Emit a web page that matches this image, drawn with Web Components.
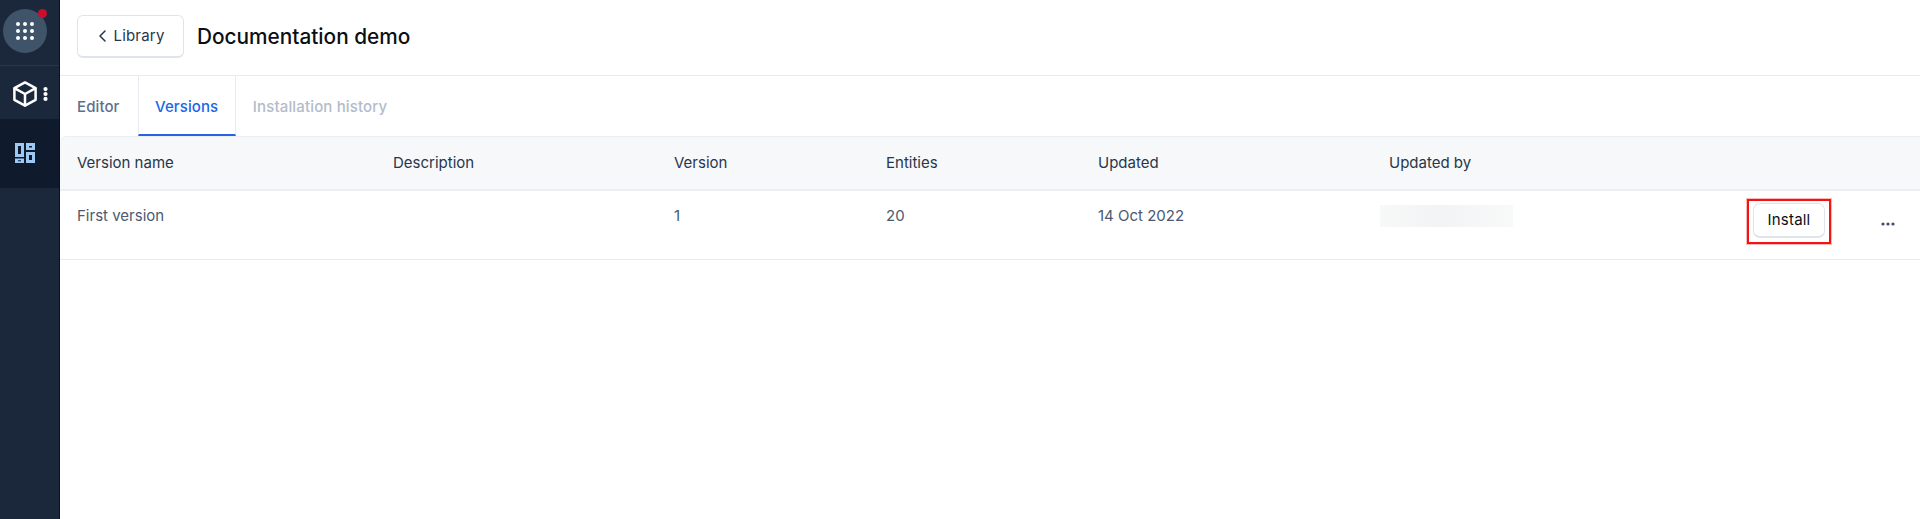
<!DOCTYPE html>
<html lang="en">
<head>
<meta charset="utf-8">
<title>Documentation demo</title>
<style>
    html, body { margin: 0; height: 100%; background: #fff; overflow: hidden; }
    body { font-family: Inter, "Liberation Sans", sans-serif; color: #27364b; }
</style>
</head>
<body>

<app-shell>
    <side-rail slot="rail"></side-rail>
    <page-header title="Documentation demo" back="Library"></page-header>
    <tab-bar>
        <tab-item>Editor</tab-item>
        <tab-item active>Versions</tab-item>
        <tab-item disabled>Installation history</tab-item>
    </tab-bar>
    <versions-table>
        <table-row head>
            <span>Version name</span><span>Description</span><span>Version</span>
            <span>Entities</span><span>Updated</span><span>Updated by</span>
        </table-row>
        <table-row>
            <span>First version</span><span></span><span>1</span>
            <span>20</span><span>14 Oct 2022</span><blur-name></blur-name>
            <install-button slot="action">Install</install-button>
            <more-dots slot="more"></more-dots>
        </table-row>
    </versions-table>
</app-shell>

<script>
class AppShell extends HTMLElement {
    constructor() {
        super();
        this.attachShadow({ mode: 'open' });
    }

    connectedCallback() {
        this.shadowRoot.innerHTML = `
            <style>
                :host { display: flex; height: 519px; width: 100%; }
                main { flex: 1; min-width: 0; display: flex; flex-direction: column; }
            </style>
            <slot name="rail"></slot>
            <main><slot></slot></main>
        `;
    }
}

class SideRail extends HTMLElement {
    constructor() {
        super();
        this.attachShadow({ mode: 'open' });
    }

    connectedCallback() {
        this.shadowRoot.innerHTML = `
            <style>
                :host {
                    display: flex;
                    flex-direction: column;
                    flex: none;
                    width: 60px;
                    box-sizing: border-box;
                    height: 100%;
                    background: #1b283b;
                    border-right: 1px solid #0b1118;
                }
                .apps {
                    height: 66px;
                    padding: 9px 0 0 3px;
                    border-bottom: 1px solid #2a3749;
                    box-sizing: border-box;
                }
                .circle {
                    position: relative;
                    width: 44px;
                    height: 44px;
                    border-radius: 50%;
                    background: #3f5369;
                    display: flex;
                    justify-content: center;
                    align-items: center;
                }
                .badge {
                    position: absolute;
                    top: 0;
                    right: 0;
                    width: 9px;
                    height: 9px;
                    border-radius: 50%;
                    background: #c8102e;
                }
                .cube {
                    height: 53px;
                    display: flex;
                    align-items: center;
                    padding: 3px 0 0 13px;
                    gap: 6px;
                    box-sizing: border-box;
                }
                .active {
                    height: 69px;
                    background: #0f1b2c;
                    padding: 24px 0 0 15px;
                    box-sizing: border-box;
                }
                svg { display: block; }
            </style>
            <div class="apps">
                <div class="circle">
                    <span class="badge"></span>
                    <svg width="18" height="18" viewBox="0 0 18 18" fill="#fff">
                        <circle cx="2" cy="2" r="2"/><circle cx="9" cy="2" r="2"/><circle cx="16" cy="2" r="2"/>
                        <circle cx="2" cy="9" r="2"/><circle cx="9" cy="9" r="2"/><circle cx="16" cy="9" r="2"/>
                        <circle cx="2" cy="16" r="2"/><circle cx="9" cy="16" r="2"/><circle cx="16" cy="16" r="2"/>
                    </svg>
                </div>
            </div>
            <div class="cube">
                <svg width="24" height="26" viewBox="0 0 24 26" fill="none" stroke="#fff" stroke-width="2.5" stroke-linejoin="round" stroke-linecap="round">
                    <path d="M12 1.400 22.600 7.200V18.800L12 24.600 1.400 18.800V7.200Z"/>
                    <path d="M1.800 7.400 12 13 22.200 7.400M12 13V24.200"/>
                </svg>
                <svg width="5" height="14" viewBox="0 0 5 14" fill="#fff">
                    <circle cx="2.500" cy="2.100" r="2.100"/><circle cx="2.500" cy="7" r="2.100"/><circle cx="2.500" cy="11.900" r="2.100"/>
                </svg>
            </div>
            <div class="active">
                <svg width="20" height="20" viewBox="0 0 20 20">
                    <path fill="#9cc8f2" fill-rule="evenodd" d="M0 0H9V14H0ZM3 3V11H6V3ZM11 0H20V7H11ZM14 3V4.500H17V3ZM0 15.500H9V20H0ZM3 17.300V18.300H6V17.300ZM11 9H20V20H11ZM14 12V17H17V12Z"/>
                </svg>
            </div>
        `;
    }
}

class PageHeader extends HTMLElement {
    constructor() {
        super();
        this.attachShadow({ mode: 'open' });
    }

    connectedCallback() {
        this.shadowRoot.innerHTML = `
            <style>
                :host {
                    display: flex;
                    align-items: center;
                    flex: none;
                    height: 76px;
                    box-sizing: border-box;
                    padding: 0 0 3px 17px;
                    border-bottom: 1px solid #e8ebef;
                }
                .back {
                    box-sizing: border-box;
                    width: 107px;
                    height: 43px;
                    padding-left: 3px;
                    display: flex;
                    align-items: center;
                    justify-content: center;
                    gap: 7px;
                    border: 1px solid #dfe4ea;
                    border-bottom-width: 2px;
                    border-radius: 6px;
                    font-size: 15px;
                    letter-spacing: .2px;
                    color: #27364b;
                }
                h1 {
                    margin: 0 0 0 13px;
                    font-size: 20.800px;
                    font-weight: 500;
                    color: #0b0f14;
                }
                svg { display: block; }
            </style>
            <div class="back">
                <svg width="7" height="12" viewBox="0 0 7 12" fill="none" stroke="#27364b" stroke-width="1.500" stroke-linecap="round" stroke-linejoin="round">
                    <path d="M6 1 1 6l5 5"/>
                </svg>
                <span>${this.getAttribute('back')}</span>
            </div>
            <h1>${this.getAttribute('title')}</h1>
        `;
    }
}

class TabBar extends HTMLElement {
    constructor() {
        super();
        this.attachShadow({ mode: 'open' });
    }

    connectedCallback() {
        this.shadowRoot.innerHTML = `
            <style>
                :host {
                    display: flex;
                    flex: none;
                    height: 60px;
                }
            </style>
            <slot></slot>
        `;
    }
}

class TabItem extends HTMLElement {
    constructor() {
        super();
        this.attachShadow({ mode: 'open' });
    }

    connectedCallback() {
        this.shadowRoot.innerHTML = `
            <style>
                :host {
                    display: flex;
                    align-items: center;
                    box-sizing: border-box;
                    padding: 0 17px;
                    font-size: 15px;
                    font-weight: 500;
                    letter-spacing: .1px;
                    color: #5f6f8c;
                    border-left: 1px solid transparent;
                    border-right: 1px solid transparent;
                }
                :host(:first-child) { margin-left: -1px; }
                :host([active]) {
                    color: #1a66e8;
                    border-left-color: #e8ebef;
                    border-right-color: #e8ebef;
                    border-bottom: 2px solid #2563e0;
                    padding: 2px 16.500px 0;
                }
                :host([disabled]) { color: #b3bbca; letter-spacing: .15px; margin-left: -1px; }
            </style>
            <slot></slot>
        `;
    }
}

class VersionsTable extends HTMLElement {
    constructor() {
        super();
        this.attachShadow({ mode: 'open' });
    }

    connectedCallback() {
        this.shadowRoot.innerHTML = `
            <style>
                :host { display: block; }
            </style>
            <slot></slot>
        `;
    }
}

class TableRow extends HTMLElement {
    constructor() {
        super();
        this.attachShadow({ mode: 'open' });
    }

    connectedCallback() {
        this.shadowRoot.innerHTML = `
            <style>
                :host {
                    display: grid;
                    grid-template-columns: 316px 281px 212px 212px 291px 358px 134px 1fr;
                    box-sizing: border-box;
                    height: 69px;
                    padding: 16px 0 0 17px;
                    font-size: 15px;
                    line-height: 18px;
                    color: #4b5a70;
                    border-bottom: 1px solid #e8ebef;
                }
                :host([head]) {
                    height: 55px;
                    align-items: center;
                    padding: 0 0 0 17px;
                    color: #27364b;
                    background: #f7f8fa;
                    border-top: 1px solid #eceef1;
                    border-bottom: 2px solid #eceef1;
                    border-top-left-radius: 6px;
                }
            </style>
            <slot></slot>
            <slot name="action"></slot>
            <slot name="more"></slot>
        `;
    }
}

class BlurName extends HTMLElement {
    constructor() {
        super();
        this.attachShadow({ mode: 'open' });
    }

    connectedCallback() {
        this.shadowRoot.innerHTML = `
            <style>
                :host {
                    display: block;
                    width: 133px;
                    height: 22px;
                    margin: -2px 0 0 -9px;
                    background: linear-gradient(90deg, #f7f8f8, #f2f3f4 45%, #f8f9f9);
                }
            </style>
        `;
    }
}

class InstallButton extends HTMLElement {
    constructor() {
        super();
        this.attachShadow({ mode: 'open' });
    }

    connectedCallback() {
        this.shadowRoot.innerHTML = `
            <style>
                :host {
                    display: block;
                    justify-self: start;
                    box-sizing: border-box;
                    margin-top: -8px;
                    padding: 2px 4px 4px;
                    border: 2px solid #f01414;
                    box-shadow: 0 0 0 1px rgba(240, 20, 20, .3);
                    width: 84px;
                    height: 45px;
                }
                div {
                    box-sizing: border-box;
                    height: 35px;
                    display: flex;
                    align-items: center;
                    justify-content: center;
                    border: 1px solid #dfe4ea;
                    border-bottom-width: 2px;
                    border-radius: 7px;
                    font-size: 15px;
                    letter-spacing: .2px;
                    color: #0b0f14;
                }
            </style>
            <div><slot></slot></div>
        `;
    }
}

class MoreDots extends HTMLElement {
    constructor() {
        super();
        this.attachShadow({ mode: 'open' });
    }

    connectedCallback() {
        this.shadowRoot.innerHTML = `
            <style>
                :host { display: block; margin-top: 15px; }
                svg { display: block; }
            </style>
            <svg width="14" height="4" viewBox="0 0 14 4" fill="#3f4d66">
                <circle cx="2" cy="2" r="1.600"/><circle cx="7" cy="2" r="1.600"/><circle cx="12" cy="2" r="1.600"/>
            </svg>
        `;
    }
}

customElements.define('app-shell', AppShell);
customElements.define('side-rail', SideRail);
customElements.define('page-header', PageHeader);
customElements.define('tab-bar', TabBar);
customElements.define('tab-item', TabItem);
customElements.define('versions-table', VersionsTable);
customElements.define('table-row', TableRow);
customElements.define('blur-name', BlurName);
customElements.define('install-button', InstallButton);
customElements.define('more-dots', MoreDots);
</script>
</body>
</html>
